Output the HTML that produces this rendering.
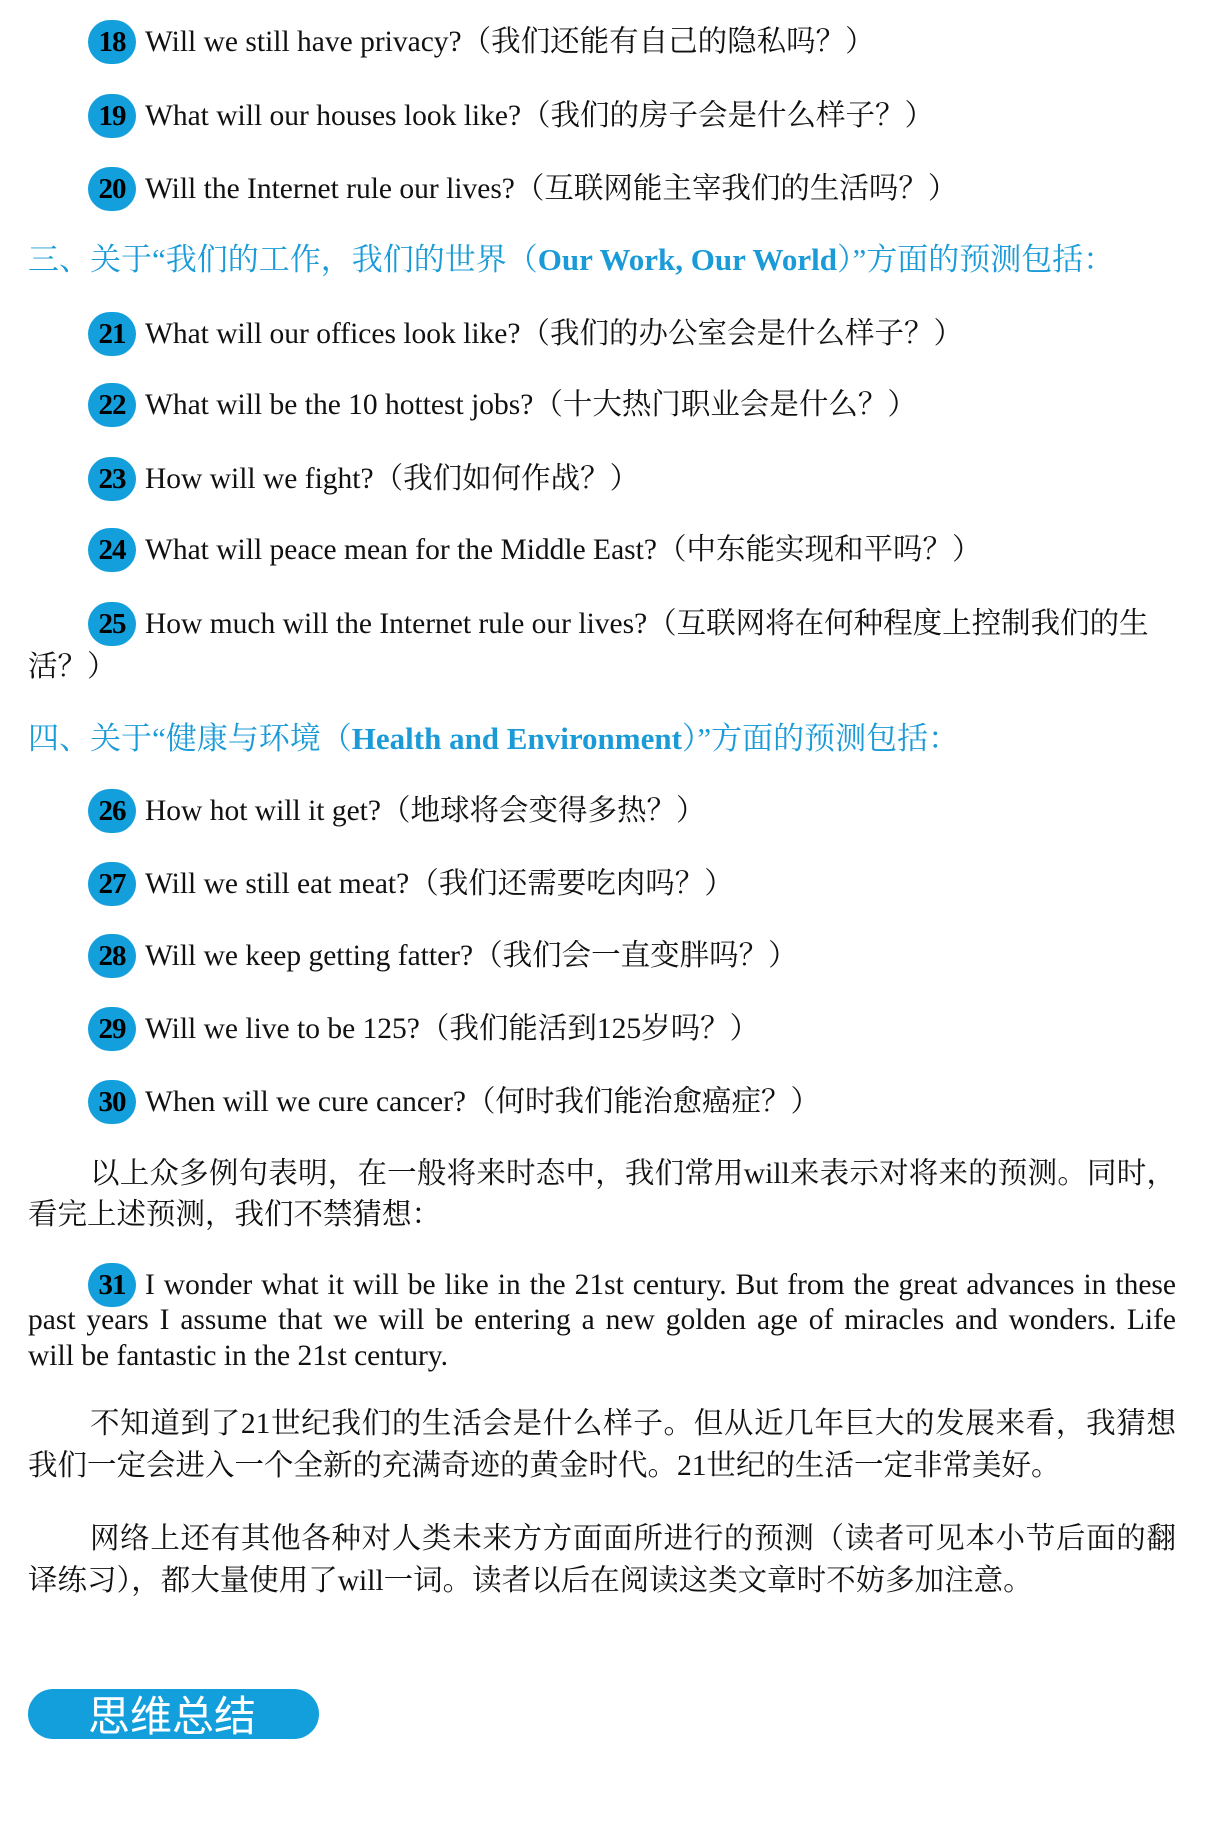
<!DOCTYPE html>
<html><head><meta charset="utf-8"><style>
body{margin:0;width:1207px;height:1828px;background:#fff;position:relative;overflow:hidden;font-family:"Liberation Serif","Noto Serif CJK SC",serif;color:#111;}
.l{position:absolute;left:145px;height:40px;line-height:40px;font-size:29.5px;white-space:nowrap;}
.b{position:absolute;left:88px;width:48px;height:44px;border-radius:22px;background:#139fdc;color:#000;font-weight:bold;font-size:29px;line-height:44px;text-align:center;letter-spacing:-1px;}
.h{position:absolute;left:28px;height:40px;line-height:40px;font-size:31px;color:#1a9bd8;white-space:nowrap;}
.h b{font-weight:bold;}
.p{position:absolute;left:28px;width:1148px;height:40px;line-height:40px;font-size:29.5px;white-space:nowrap;}
.j{text-align:justify;text-align-last:justify;}
</style></head><body>
<div class="b" style="top:20px">18</div><div class="l" style="top:22px">Will we still have privacy?（我们还能有自己的隐私吗？）</div>
<div class="b" style="top:94px">19</div><div class="l" style="top:96px">What will our houses look like?（我们的房子会是什么样子？）</div>
<div class="b" style="top:167px">20</div><div class="l" style="top:169px">Will the Internet rule our lives?（互联网能主宰我们的生活吗？）</div>
<div class="h" style="top:240px">三、关于“我们的工作，我们的世界（<b>Our Work, Our World</b>）”方面的预测包括：</div>
<div class="b" style="top:312px">21</div><div class="l" style="top:314px">What will our offices look like?（我们的办公室会是什么样子？）</div>
<div class="b" style="top:383px">22</div><div class="l" style="top:385px">What will be the 10 hottest jobs?（十大热门职业会是什么？）</div>
<div class="b" style="top:457px">23</div><div class="l" style="top:459px">How will we fight?（我们如何作战？）</div>
<div class="b" style="top:528px">24</div><div class="l" style="top:530px">What will peace mean for the Middle East?（中东能实现和平吗？）</div>
<div class="b" style="top:602px">25</div><div class="l" style="top:604px">How much will the Internet rule our lives?（互联网将在何种程度上控制我们的生</div>
<div class="p" style="top:647px">活？）</div>
<div class="h" style="top:719px">四、关于“健康与环境（<b>Health and Environment</b>）”方面的预测包括：</div>
<div class="b" style="top:789px">26</div><div class="l" style="top:791px">How hot will it get?（地球将会变得多热？）</div>
<div class="b" style="top:862px">27</div><div class="l" style="top:864px">Will we still eat meat?（我们还需要吃肉吗？）</div>
<div class="b" style="top:934px">28</div><div class="l" style="top:936px">Will we keep getting fatter?（我们会一直变胖吗？）</div>
<div class="b" style="top:1007px">29</div><div class="l" style="top:1009px">Will we live to be 125?（我们能活到125岁吗？）</div>
<div class="b" style="top:1080px">30</div><div class="l" style="top:1082px">When will we cure cancer?（何时我们能治愈癌症？）</div>
<div class="p j" style="top:1154px;left:90px;width:1086px">以上众多例句表明，在一般将来时态中，我们常用will来表示对将来的预测。同时，</div>
<div class="p" style="top:1195px">看完上述预测，我们不禁猜想：</div>
<div class="b" style="top:1263px">31</div><div class="l j" style="top:1265px;width:1031px">I wonder what it will be like in the 21st century. But from the great advances in these</div>
<div class="p j" style="top:1300px">past years I assume that we will be entering a new golden age of miracles and wonders. Life</div>
<div class="p" style="top:1336px">will be fantastic in the 21st century.</div>
<div class="p j" style="top:1404px;left:90px;width:1086px">不知道到了21世纪我们的生活会是什么样子。但从近几年巨大的发展来看，我猜想</div>
<div class="p" style="top:1446px">我们一定会进入一个全新的充满奇迹的黄金时代。21世纪的生活一定非常美好。</div>
<div class="p j" style="top:1519px;left:90px;width:1086px">网络上还有其他各种对人类未来方方面面所进行的预测（读者可见本小节后面的翻</div>
<div class="p" style="top:1561px">译练习），都大量使用了will一词。读者以后在阅读这类文章时不妨多加注意。</div>
<div style="position:absolute;left:28px;top:1689px;width:291px;height:50px;border-radius:25px;background:#139fdc;color:#fff;font-family:'Noto Sans CJK SC',sans-serif;font-size:42px;line-height:50px;padding-left:60px;box-sizing:border-box;">思维总结</div>
</body></html>
